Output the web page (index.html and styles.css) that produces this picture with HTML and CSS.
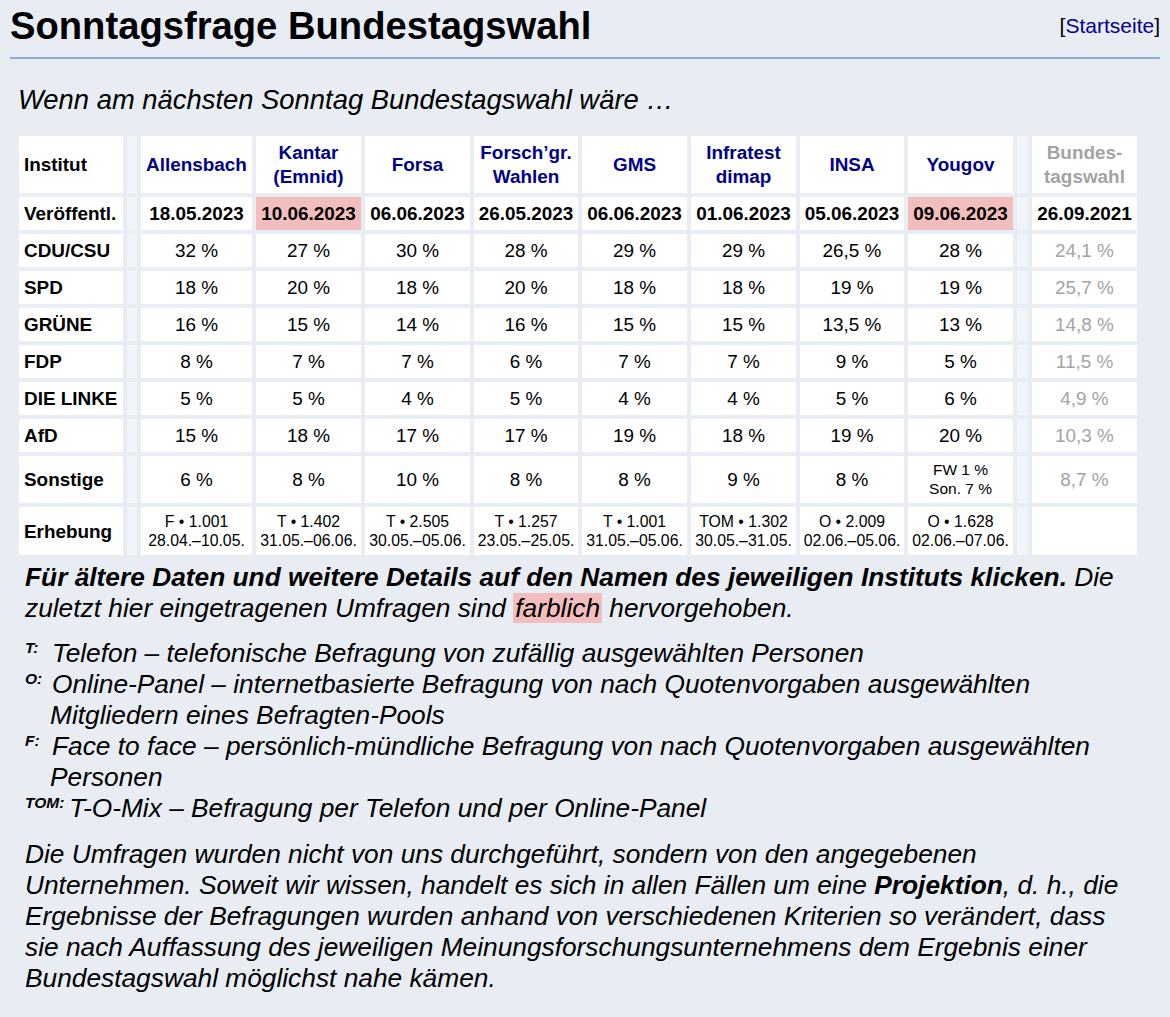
FILE: index.html
```html
<!DOCTYPE html>
<html lang="de">
<head>
<meta charset="utf-8">
<title>Sonntagsfrage Bundestagswahl</title>
<link rel="stylesheet" href="styles.css">
</head>
<body>
<header class="top">
  <h1 class="title">Sonntagsfrage Bundestagswahl</h1>
  <div class="home">[<a href="#">Startseite</a>]</div>
</header>
<main class="content">
  <p class="lead">Wenn am nächsten Sonntag Bundestagswahl wäre …</p>
  <table class="polls">
    <colgroup>
      <col class="c-lbl"><col class="c-sp"><col class="c-wide">
      <col class="c-std"><col class="c-std"><col class="c-nar"><col class="c-std">
      <col class="c-std"><col class="c-nar"><col class="c-std">
      <col class="c-sp2"><col class="c-std">
    </colgroup>
    <tbody>
      <tr class="head">
        <th class="lbl">Institut</th><td class="sp"></td>
        <th><a href="#">Allensbach</a></th>
        <th><a href="#">Kantar<br>(Emnid)</a></th>
        <th><a href="#">Forsa</a></th>
        <th><a href="#">Forsch’gr.<br>Wahlen</a></th>
        <th><a href="#">GMS</a></th>
        <th><a href="#">Infratest<br>dimap</a></th>
        <th><a href="#">INSA</a></th>
        <th><a href="#">Yougov</a></th>
        <td class="sp"></td>
        <th class="btw">Bundes-<br>tagswahl</th>
      </tr>
      <tr class="dates">
        <th class="lbl">Veröffentl.</th><td class="sp"></td>
        <td>18.05.2023</td><td class="new">10.06.2023</td><td>06.06.2023</td><td>26.05.2023</td>
        <td>06.06.2023</td><td>01.06.2023</td><td>05.06.2023</td><td class="new">09.06.2023</td>
        <td class="sp"></td><td>26.09.2021</td>
      </tr>
      <tr>
        <th class="lbl">CDU/CSU</th><td class="sp"></td>
        <td>32 %</td><td>27 %</td><td>30 %</td><td>28 %</td><td>29 %</td><td>29 %</td><td>26,5 %</td><td>28 %</td>
        <td class="sp"></td><td class="btw">24,1 %</td>
      </tr>
      <tr>
        <th class="lbl">SPD</th><td class="sp"></td>
        <td>18 %</td><td>20 %</td><td>18 %</td><td>20 %</td><td>18 %</td><td>18 %</td><td>19 %</td><td>19 %</td>
        <td class="sp"></td><td class="btw">25,7 %</td>
      </tr>
      <tr>
        <th class="lbl">GRÜNE</th><td class="sp"></td>
        <td>16 %</td><td>15 %</td><td>14 %</td><td>16 %</td><td>15 %</td><td>15 %</td><td>13,5 %</td><td>13 %</td>
        <td class="sp"></td><td class="btw">14,8 %</td>
      </tr>
      <tr>
        <th class="lbl">FDP</th><td class="sp"></td>
        <td>8 %</td><td>7 %</td><td>7 %</td><td>6 %</td><td>7 %</td><td>7 %</td><td>9 %</td><td>5 %</td>
        <td class="sp"></td><td class="btw">11,5 %</td>
      </tr>
      <tr>
        <th class="lbl">DIE LINKE</th><td class="sp"></td>
        <td>5 %</td><td>5 %</td><td>4 %</td><td>5 %</td><td>4 %</td><td>4 %</td><td>5 %</td><td>6 %</td>
        <td class="sp"></td><td class="btw">4,9 %</td>
      </tr>
      <tr>
        <th class="lbl">AfD</th><td class="sp"></td>
        <td>15 %</td><td>18 %</td><td>17 %</td><td>17 %</td><td>19 %</td><td>18 %</td><td>19 %</td><td>20 %</td>
        <td class="sp"></td><td class="btw">10,3 %</td>
      </tr>
      <tr>
        <th class="lbl">Sonstige</th><td class="sp"></td>
        <td>6 %</td><td>8 %</td><td>10 %</td><td>8 %</td><td>8 %</td><td>9 %</td><td>8 %</td>
        <td class="small">FW 1 %<br>Son. 7 %</td>
        <td class="sp"></td><td class="btw">8,7 %</td>
      </tr>
      <tr class="survey">
        <th class="lbl">Erhebung</th><td class="sp"></td>
        <td>F • 1.001<br>28.04.–10.05.</td>
        <td>T • 1.402<br>31.05.–06.06.</td>
        <td>T • 2.505<br>30.05.–05.06.</td>
        <td>T • 1.257<br>23.05.–25.05.</td>
        <td>T • 1.001<br>31.05.–05.06.</td>
        <td>TOM • 1.302<br>30.05.–31.05.</td>
        <td>O • 2.009<br>02.06.–05.06.</td>
        <td>O • 1.628<br>02.06.–07.06.</td>
        <td class="sp"></td><td></td>
      </tr>
    </tbody>
  </table>

  <p class="text first"><b>Für ältere Daten und weitere Details auf den Namen des jeweiligen Instituts klicken.</b> Die zuletzt hier eingetragenen Umfragen sind <span class="mark">farblich</span> hervorgehoben.</p>

  <div class="notes">
    <p class="note"><span class="key">T:</span>Telefon – telefonische Befragung von zufällig ausgewählten Personen</p>
    <p class="note"><span class="key">O:</span>Online-Panel – internetbasierte Befragung von nach Quotenvorgaben ausgewählten Mitgliedern eines Befragten-Pools</p>
    <p class="note"><span class="key">F:</span>Face to face – persönlich-mündliche Befragung von nach Quotenvorgaben ausgewählten Personen</p>
    <p class="note"><span class="key">TOM:</span>T-O-Mix – Befragung per Telefon und per Online-Panel</p>
  </div>

  <p class="text last">Die Umfragen wurden nicht von uns durchgeführt, sondern von den angegebenen Unternehmen. Soweit wir wissen, handelt es sich in allen Fällen um eine <b>Projektion</b>, d. h., die Ergebnisse der Befragungen wurden anhand von verschiedenen Kriterien so verändert, dass sie nach Auffassung des jeweiligen Meinungsforschungsunternehmens dem Ergebnis einer Bundestagswahl möglichst nahe kämen.</p>
</main>
</body>
</html>
```

FILE: styles.css
```css
html, body {
  margin: 0;
  padding: 0;
}
body {
  background: #e8edf4;
  color: #000;
  font-family: "Liberation Sans", Arial, sans-serif;
  width: 1170px;
}
a {
  color: #00008b;
  text-decoration: none;
}

/* header */
.top {
  display: flex;
  justify-content: space-between;
  align-items: flex-start;
  margin: 0 10px;
  padding: 4px 0 9px;
  border-bottom: 2px solid #8fadd6;
}
.title {
  margin: 0;
  font-size: 38.2px;
  line-height: 44px;
  font-weight: bold;
}
.home {
  margin-top: 10px;
  font-size: 21px;
  line-height: 24px;
}

/* content */
.content {
  padding: 0 29px 0 15px;
}
.lead {
  margin: 25px 0 0 3px;
  font-size: 27.4px;
  line-height: 31px;
  font-style: italic;
}

/* table */
.polls {
  margin-top: 17px;
  border-collapse: separate;
  border-spacing: 4px;
  table-layout: fixed;
  width: 1126px;
  font-size: 18.9px;
  line-height: 23px;
}
.c-lbl { width: 104px; }
.c-sp { width: 10px; }
.c-sp2 { width: 11px; }
.c-wide { width: 111px; }
.c-std { width: 105px; }
.c-nar { width: 104px; }

.polls td,
.polls th {
  background: #fff;
  padding: 5px 0;
  text-align: center;
  vertical-align: middle;
  white-space: nowrap;
  font-weight: normal;
}
.polls th {
  font-weight: bold;
}
.polls .lbl {
  text-align: left;
  padding-left: 5px;
}
.polls .sp {
  background: #f1f4f9;
  padding: 0;
}
.head th {
  line-height: 23.5px;
}
.polls .btw {
  color: #a3a3a3;
}
.dates td {
  font-weight: bold;
}
.polls .new {
  background: #f4bdbd;
}
.polls .small {
  font-size: 15.5px;
  line-height: 18.5px;
}
.survey td {
  font-size: 15.8px;
  line-height: 19px;
}

/* text */
.text {
  margin: 0 10px;
  font-size: 26.3px;
  line-height: 31px;
  font-style: italic;
}
.text.first {
  margin-top: 3px;
}
.text.last {
  margin-top: 15px;
}
.mark {
  background: #f4bdbd;
  padding: 0 2px;
}
.notes {
  margin: 14px 10px 0;
}
.note {
  margin: 0;
  padding-left: 25px;
  text-indent: -25px;
  font-size: 26.3px;
  line-height: 31px;
  font-style: italic;
}
.key {
  display: inline-block;
  text-indent: 0;
  min-width: 22px;
  padding-right: 5px;
  font-size: 15.5px;
  font-weight: bold;
  vertical-align: 9px;
  line-height: 16px;
}
```
